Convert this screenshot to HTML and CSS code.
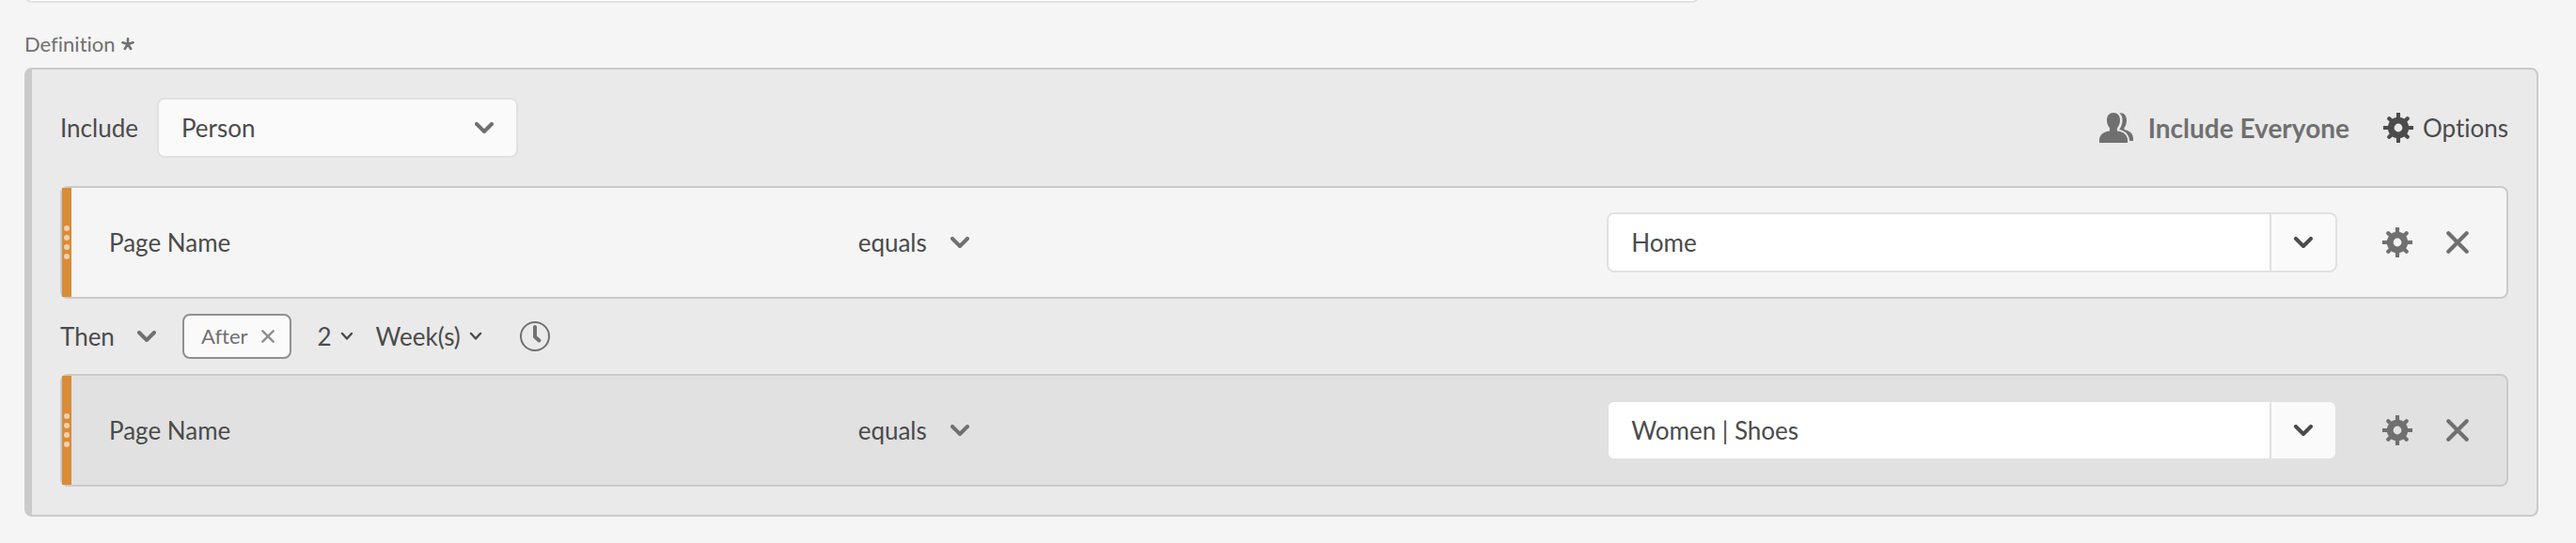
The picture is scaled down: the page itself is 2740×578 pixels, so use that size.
FILE: index.html
```html
<!DOCTYPE html>
<html lang="en">
<head>
<meta charset="utf-8">
<title>Segment definition</title>
<link rel="stylesheet" href="styles.css">
</head>
<body>
<svg class="sprite" aria-hidden="true">
  <symbol id="chevron" viewBox="0 0 20 12"><path d="M2 2l8 8 8-8" fill="none" stroke="currentColor" stroke-width="4" stroke-linecap="round" stroke-linejoin="round"/></symbol>
  <symbol id="chevron-thin" viewBox="0 0 14 10"><path d="M2 2l5 5.500 5-5.500" fill="none" stroke="currentColor" stroke-width="2.400" stroke-linecap="round" stroke-linejoin="round"/></symbol>
  <symbol id="cross" viewBox="0 0 24 24"><path d="M2.300 2.300l19.400 19.400M21.700 2.300L2.300 21.700" fill="none" stroke="currentColor" stroke-width="4.200" stroke-linecap="round"/></symbol>
  <symbol id="gear" viewBox="0 0 32 32">
    <circle cx="16" cy="16" r="7.800" fill="none" stroke="currentColor" stroke-width="6.800"/>
    <path d="M16 2v4M16 26v4M2 16h4M26 16h4M6.300 6.300l3 3M22.700 22.700l3 3M25.700 6.300l-3 3M9.300 22.700l-3 3" fill="none" stroke="currentColor" stroke-width="4.200" stroke-linecap="round"/>
    <path d="M16 0v5M16 27v5M0 16h5M27 16h5" fill="none" stroke="currentColor" stroke-width="4"/>
  </symbol>
  <symbol id="people" viewBox="0 0 36 32">
    <path d="M15 0C10.600 0 8 3.200 8 8c0 3.200 1.100 6.300 3 8.300v3.200C4.500 20 0 23.800 0 29v3h30v-3c0-5.200-4.500-9-11-9.500v-3.200c1.900-2 3-5.100 3-8.300 0-4.800-2.600-8-7-8z" fill="currentColor"/>
    <path d="M21.500.600c2 1.600 3 4.200 3 7.400 0 3.400-1.100 6.700-3 9.200v.900c6 1.200 10 5 10.700 11.900H36v-2.500c0-4.800-3.500-8.600-9.500-9.500v-2c1.500-1.800 2.500-4.800 2.500-8 0-4.800-2.600-7.800-6-7.800-.500 0-1 .100-1.500.400z" fill="currentColor"/>
  </symbol>
  <symbol id="clock" viewBox="0 0 32 32"><circle cx="16" cy="16" r="15" fill="none" stroke="currentColor" stroke-width="2"/><path d="M16 6v10.500l4.500 4" fill="none" stroke="currentColor" stroke-width="4" stroke-linecap="round" stroke-linejoin="round"/></symbol>
  <symbol id="asterisk" viewBox="0 0 14 14"><path d="M7 7V1.300M7 7L1.500 5.300M7 7l5.500-1.700M7 7l-3.200 5M7 7l3.200 5" fill="none" stroke="currentColor" stroke-width="2.600" stroke-linecap="round"/></symbol>
</svg>

<main class="page">
  <div class="previous"><input class="previous-input" type="text" aria-label="Description"></div>
  <h2 class="label">Definition <svg class="required" role="img" aria-label="required"><use href="#asterisk"/></svg></h2>

  <section class="definition">
    <header class="bar">
      <label class="bar-label" for="scope">Include</label>
      <span class="picker picker-boxed">
        <select class="picker-select" id="scope"><option>Person</option></select>
        <svg class="chevron"><use href="#chevron"/></svg>
      </span>
      <div class="bar-actions">
        <button class="action action-strong" type="button"><svg class="people"><use href="#people"/></svg>Include Everyone</button>
        <button class="action" type="button"><svg class="gear"><use href="#gear"/></svg>Options</button>
      </div>
    </header>

    <article class="rule">
      <span class="handle"><i class="dot"></i><i class="dot"></i><i class="dot"></i><i class="dot"></i></span>
      <div class="rule-body">
        <span class="rule-name">Page Name</span>
        <span class="picker">
          <select class="picker-select" aria-label="Operator"><option>equals</option></select>
          <svg class="chevron"><use href="#chevron"/></svg>
        </span>
        <div class="combo">
          <input class="combo-input" type="text" aria-label="Value" value="Home">
          <button class="combo-button" type="button" aria-label="Show values"><svg class="chevron"><use href="#chevron"/></svg></button>
        </div>
      </div>
      <div class="rule-actions">
        <button class="icon-button" type="button" aria-label="Settings"><svg class="gear"><use href="#gear"/></svg></button>
        <button class="icon-button" type="button" aria-label="Remove"><svg class="cross"><use href="#cross"/></svg></button>
      </div>
    </article>

    <div class="sequence">
      <span class="picker">
        <select class="picker-select" aria-label="Sequence"><option>Then</option></select>
        <svg class="chevron"><use href="#chevron"/></svg>
      </span>
      <span class="tag">After <button class="icon-button" type="button" aria-label="Remove After"><svg class="tag-cross"><use href="#cross"/></svg></button></span>
      <span class="interval">
        <span class="picker picker-small">
          <select class="picker-select" aria-label="Count"><option>2</option></select>
          <svg class="chevron-thin"><use href="#chevron-thin"/></svg>
        </span>
        <span class="picker picker-small">
          <select class="picker-select" aria-label="Unit"><option>Week(s)</option></select>
          <svg class="chevron-thin"><use href="#chevron-thin"/></svg>
        </span>
      </span>
      <button class="icon-button" type="button" aria-label="Time constraint"><svg class="clock"><use href="#clock"/></svg></button>
    </div>

    <article class="rule rule-dark">
      <span class="handle"><i class="dot"></i><i class="dot"></i><i class="dot"></i><i class="dot"></i></span>
      <div class="rule-body">
        <span class="rule-name">Page Name</span>
        <span class="picker">
          <select class="picker-select" aria-label="Operator"><option>equals</option></select>
          <svg class="chevron"><use href="#chevron"/></svg>
        </span>
        <div class="combo">
          <input class="combo-input" type="text" aria-label="Value" value="Women | Shoes">
          <button class="combo-button" type="button" aria-label="Show values"><svg class="chevron"><use href="#chevron"/></svg></button>
        </div>
      </div>
      <div class="rule-actions">
        <button class="icon-button" type="button" aria-label="Settings"><svg class="gear"><use href="#gear"/></svg></button>
        <button class="icon-button" type="button" aria-label="Remove"><svg class="cross"><use href="#cross"/></svg></button>
      </div>
    </article>
  </section>
</main>
</body>
</html>
```
FILE: styles.css
```css
* { box-sizing: border-box; }

body {
  margin: 0;
  background: #f5f5f5;
  color: #4b4b4b;
  font: 26px/32px Lato, "Open Sans", sans-serif;
  font-variant-ligatures: none;
}

button, input, select {
  margin: 0;
  padding: 0;
  border: 0;
  background: none;
  color: inherit;
  font: inherit;
  font-variant-ligatures: none;
}

select { appearance: none; cursor: pointer; }
button { cursor: pointer; }
svg { display: block; flex: none; }

.sprite { position: absolute; width: 0; height: 0; }

.page { padding: 0 40px 24px 26px; }

/* Bottom edge of the field scrolled above the definition */
.previous {
  display: flex;
  align-items: flex-end;
  height: 3px;
  overflow: hidden;
}
.previous-input {
  flex: none;
  width: 66.66%;
  height: 64px;
  border: 2px solid #e1e1e1;
  border-radius: 8px;
  background: #fff;
}

.label {
  display: flex;
  align-items: center;
  gap: 6px;
  margin: 30px 0 11px;
  color: #707070;
  font-size: 22px;
  font-weight: 400;
  line-height: 28px;
}
.required { width: 14px; height: 14px; }

.definition {
  padding: 30px;
  border: 2px solid #cacaca;
  border-left-width: 8px;
  border-radius: 8px;
  background: #eaeaea;
}

.bar {
  display: flex;
  align-items: center;
  gap: 20px;
  margin-bottom: 30px;
}
.bar-actions {
  display: flex;
  align-items: center;
  gap: 36px;
  margin-left: auto;
}
.action { display: flex; align-items: center; gap: 10px; }
.action-strong {
  gap: 16px;
  color: #707070;
  font-size: 28px;
  font-weight: 700;
}

/* Drop-down whose arrow shares the cell of the select */
.picker { display: inline-grid; align-items: center; justify-self: start; }
.picker > * { grid-area: 1 / 1; }
.picker > svg { justify-self: end; pointer-events: none; color: #707070; }
.picker > .picker-select { padding-right: 44px; }
.picker-boxed {
  width: 384px;
  height: 64px;
  padding-right: 24px;
  border: 2px solid #e1e1e1;
  border-radius: 8px;
  background: #fafafa;
}
.picker-boxed > .picker-select { padding: 0 44px 0 24px; }
.picker-small > svg { color: #4b4b4b; }
.picker-small > .picker-select { padding-right: 22px; }

.chevron { width: 20px; height: 12px; }
.chevron-thin { width: 14px; height: 10px; }
.gear, .clock { width: 32px; height: 32px; }
.people { width: 36px; height: 32px; }
.cross { width: 24px; height: 24px; }
.tag-cross { width: 14px; height: 14px; }

.rule {
  display: flex;
  height: 120px;
  border: 2px solid #cacaca;
  border-radius: 8px;
  background: #f5f5f5;
}
.rule-dark { background: #e1e1e1; }

.handle {
  display: flex;
  flex: none;
  flex-direction: column;
  align-items: center;
  justify-content: center;
  gap: 4px;
  width: 10px;
  background: #da8b37;
}
.dot { width: 6px; height: 6px; border-radius: 50%; background: #f0d0ae; }

.rule-body {
  display: grid;
  flex: 1;
  grid-template-columns: repeat(3, 1fr);
  align-items: center;
  gap: 20px;
  padding: 0 48px 0 40px;
}

.combo {
  display: flex;
  height: 64px;
  border: 2px solid #e1e1e1;
  border-radius: 8px;
  background: #fafafa;
  overflow: hidden;
}
.combo-input {
  flex: 1;
  min-width: 0;
  padding: 0 24px;
  background: #fff;
}
.combo-button {
  display: flex;
  align-items: center;
  justify-content: center;
  width: 70px;
  border-left: 2px solid #e1e1e1;
}

.rule-actions {
  display: flex;
  align-items: center;
  gap: 36px;
  padding-right: 40px;
  color: #707070;
}
.icon-button { display: flex; color: #707070; }

.sequence {
  display: flex;
  align-items: center;
  gap: 28px;
  height: 80px;
}
.tag {
  display: flex;
  align-items: center;
  gap: 14px;
  height: 48px;
  padding: 0 16px 0 18px;
  border: 2px solid #909090;
  border-radius: 8px;
  background: #fafafa;
  color: #707070;
  font-size: 22px;
}
.sequence .tag .icon-button { color: #909090; }
.interval { display: flex; gap: 24px; margin-right: 12px; }
```
